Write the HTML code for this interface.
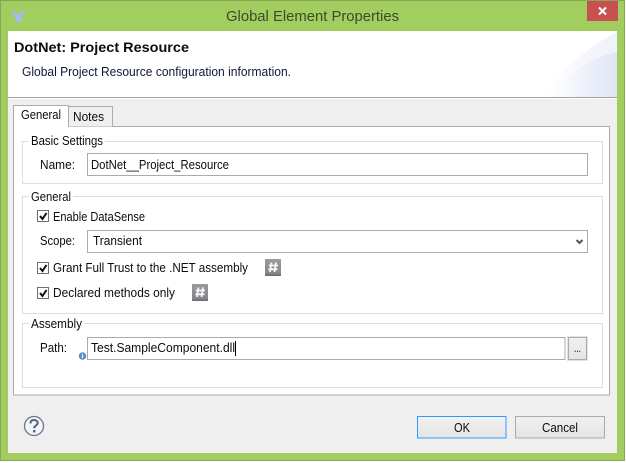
<!DOCTYPE html>
<html><head><meta charset="utf-8"><style>
html,body{margin:0;padding:0;background:#fff;width:626px;height:463px;overflow:hidden}
svg{display:block}
text{font-family:"Liberation Sans",sans-serif;font-size:12.500px;fill:#0c0c0c}
</style></head><body>
<svg width="626" height="463" viewBox="0 0 626 463" xmlns="http://www.w3.org/2000/svg">
<defs>
<linearGradient id="c" gradientUnits="userSpaceOnUse" x1="545" y1="97" x2="617" y2="60"><stop offset="0" stop-color="#fff"/><stop offset="1" stop-color="#f0f3fb"/></linearGradient>
<linearGradient id="d" gradientUnits="userSpaceOnUse" x1="550" y1="80" x2="617" y2="80"><stop offset="0" stop-color="#fff"/><stop offset="1" stop-color="#dfe5f5"/></linearGradient>
<linearGradient id="b" x1="0" y1="0" x2="0" y2="1"><stop offset="0" stop-color="#f1f1f1"/><stop offset="1" stop-color="#e4e4e4"/></linearGradient>
<linearGradient id="h" x1="0" y1="0" x2="0" y2="1"><stop offset="0" stop-color="#9c9c9c"/><stop offset=".85" stop-color="#858585"/><stop offset="1" stop-color="#686868"/></linearGradient>
<filter id="s" x="-30%" y="-30%" width="160%" height="160%"><feGaussianBlur stdDeviation="0.350"/></filter>
</defs>
<rect x="0" y="0" width="625" height="461" fill="#a2cd5f"/>
<rect x="0.500" y="0.500" width="624" height="460" fill="none" stroke="#86a856"/>
<path d="M12 7.500C12 12 13.500 15.500 15.500 17L15 22H22L21.500 17C23.500 15.500 25 12 25 7.500C24.500 11 21 12 18.500 15C16 12 12.500 11 12 7.500Z" fill="#a0bdec" filter="url(#s)"/>
<text x="226" y="21" textLength="173" lengthAdjust="spacingAndGlyphs" style="font-size:15px;fill:#3c4a30">Global Element Properties</text>
<rect x="587" y="1" width="31" height="20" fill="#c75050"/>
<path d="M599 7.500L606 14.500M606 7.500L599 14.500" stroke="#fff" stroke-width="2"/>
<rect x="8" y="31" width="609" height="422" fill="#efefef"/>
<rect x="8" y="31" width="609" height="66" fill="#fff"/>
<path d="M543 97C562 70 590 45 617 32V97Z" fill="url(#c)"/>
<path d="M550 97C566 74 592 57 617 52V97Z" fill="url(#d)"/>
<rect x="8" y="97" width="609" height="1" fill="#a0a0a0"/>
<rect x="8" y="98" width="609" height="1" fill="#fff"/>
<text x="14" y="52" textLength="175" lengthAdjust="spacingAndGlyphs" style="font-size:14px;font-weight:bold">DotNet: Project Resource</text>
<text x="22" y="76" textLength="269" lengthAdjust="spacingAndGlyphs" style="fill:#10183a">Global Project Resource configuration information.</text>
<rect x="13.500" y="126.500" width="596" height="268.500" fill="#fff" stroke="#ababab"/>
<path d="M68.500 126.500V106.500H112.500V126.500" fill="#efefef" stroke="#ababab"/>
<path d="M13.500 127V105.500H68.500V127" fill="#fff" stroke="#ababab"/>
<rect x="14" y="126" width="54" height="2" fill="#fff"/>
<text x="21" y="119" textLength="40" lengthAdjust="spacingAndGlyphs">General</text>
<text x="73" y="121" textLength="31" lengthAdjust="spacingAndGlyphs">Notes</text>

<rect x="22.500" y="141.500" width="580" height="42" fill="none" stroke="#dedede"/>
<rect x="29" y="136" width="76" height="12" fill="#fff"/>
<text x="31" y="145" textLength="72" lengthAdjust="spacingAndGlyphs">Basic Settings</text>
<text x="40" y="169" textLength="35" lengthAdjust="spacingAndGlyphs">Name:</text>
<rect x="87.500" y="153.500" width="500" height="22" fill="#fff" stroke="#ababab"/>
<text x="91" y="169" textLength="138" lengthAdjust="spacingAndGlyphs">DotNet__Project_Resource</text>

<rect x="22.500" y="196.500" width="580" height="117" fill="none" stroke="#dedede"/>
<rect x="29" y="192" width="44" height="12" fill="#fff"/>
<text x="31" y="201" textLength="40" lengthAdjust="spacingAndGlyphs">General</text>

<g fill="#fff" stroke="#6f6f6f"><rect x="37.500" y="210.500" width="11" height="11"/><rect x="37.500" y="262.500" width="11" height="11"/><rect x="37.500" y="287.500" width="11" height="11"/></g>
<g fill="none" stroke="#111" stroke-width="2"><path d="M40 216L42.500 219L46.500 213"/><path d="M40 268L42.500 271L46.500 265"/><path d="M40 293L42.500 296L46.500 290"/></g>
<text x="53" y="221" textLength="92" lengthAdjust="spacingAndGlyphs">Enable DataSense</text>
<text x="40" y="245" textLength="35" lengthAdjust="spacingAndGlyphs">Scope:</text>
<rect x="87.500" y="230.500" width="500" height="22" fill="#fff" stroke="#ababab"/>
<text x="93" y="245" textLength="49" lengthAdjust="spacingAndGlyphs">Transient</text>
<path d="M576.500 240L579.500 243L582.500 240" fill="none" stroke="#555" stroke-width="2"/>
<text x="53" y="272" textLength="195" lengthAdjust="spacingAndGlyphs">Grant Full Trust to the .NET assembly</text>
<text x="53" y="297" textLength="122" lengthAdjust="spacingAndGlyphs">Declared methods only</text>

<rect x="265" y="259" width="16" height="17" fill="url(#h)"/>
<rect x="192" y="284" width="16" height="17" fill="url(#h)"/>
<g stroke="#f2f7ff" stroke-width="1.800" fill="none" filter="url(#s)">
<path d="M271.500 262.500L270 272M276 262.500L274.500 272M268.800 265.500H278M268.300 269.300H277.500"/>
<path d="M198.500 287.500L197 297M203 287.500L201.500 297M195.800 290.500H205M195.300 294.300H204.500"/>
</g>

<rect x="22.500" y="323.500" width="580" height="64" fill="none" stroke="#dedede"/>
<rect x="29" y="318" width="55" height="12" fill="#fff"/>
<text x="31" y="328" textLength="51" lengthAdjust="spacingAndGlyphs">Assembly</text>
<text x="40" y="352" textLength="27" lengthAdjust="spacingAndGlyphs">Path:</text>
<circle cx="82.500" cy="356" r="3.800" fill="#5b93c7"/>
<rect x="82" y="353.500" width="1" height="1" fill="#fff"/><rect x="82" y="355" width="1" height="3" fill="#fff"/>
<rect x="87.500" y="337.500" width="477.500" height="22" fill="#fff" stroke="#ababab"/>
<text x="91" y="352" textLength="144" lengthAdjust="spacingAndGlyphs">Test.SampleComponent.dll</text>
<rect x="235" y="341" width="1" height="15" fill="#000"/>
<rect x="567.500" y="336.500" width="20" height="24" fill="#efefef" stroke="#e2e2e2"/>
<rect x="568.500" y="337.500" width="18" height="22" fill="url(#b)" stroke="#ababab"/>
<text x="574" y="352" textLength="7" lengthAdjust="spacingAndGlyphs">...</text>

<circle cx="34" cy="426" r="9.500" fill="#f4f5f8" stroke="#6b7590" stroke-width="1.300"/>
<path d="M30.500 423.500C30.500 421 32 420 34 420C36 420 37.700 421.200 37.700 423C37.700 425.300 34.200 425.500 34.200 428.200" fill="none" stroke="#55607e" stroke-width="2"/>
<rect x="33" y="430" width="2.400" height="2.400" fill="#55607e"/>

<rect x="417.500" y="416.500" width="88.500" height="21.500" fill="url(#b)" stroke="#3399ff"/>
<text x="454" y="432" textLength="16" lengthAdjust="spacingAndGlyphs">OK</text>
<rect x="515.500" y="416.500" width="89" height="21.500" fill="url(#b)" stroke="#ababab"/>
<text x="542" y="432" textLength="36" lengthAdjust="spacingAndGlyphs">Cancel</text>
</svg>
</body></html>
